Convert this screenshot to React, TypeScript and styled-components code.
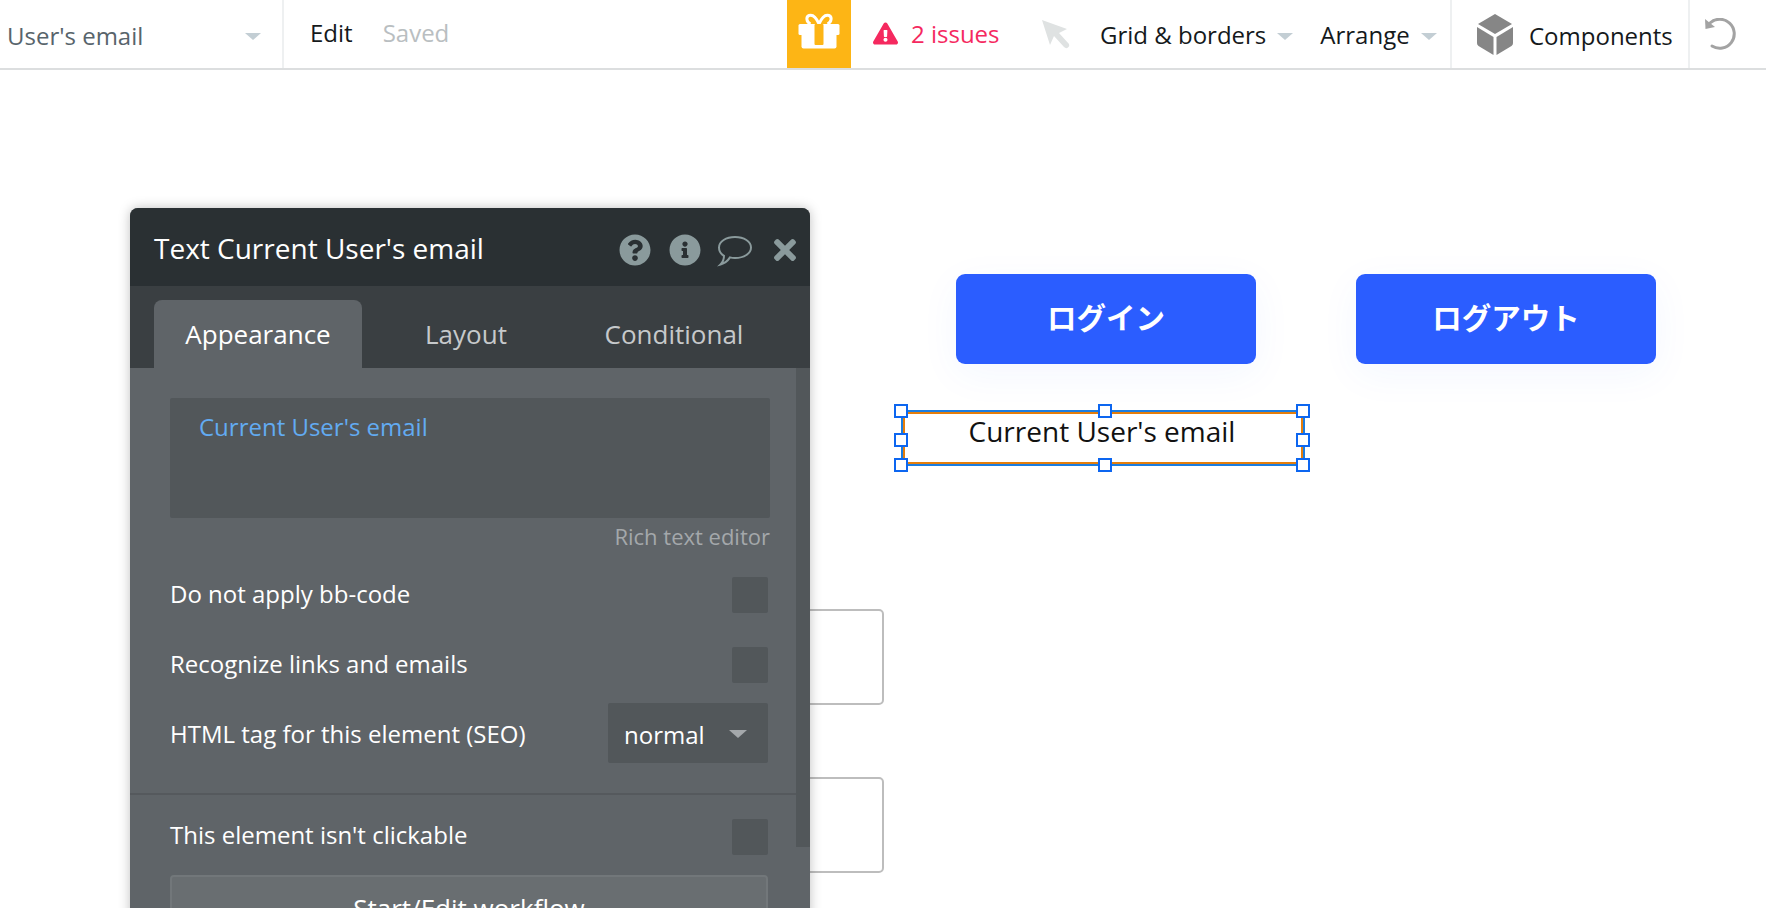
import React from "react";
import styled, { createGlobalStyle } from "styled-components";
import { FaExclamationTriangle, FaInfoCircle, FaQuestionCircle, FaTimes } from "react-icons/fa";

const GlobalStyle = createGlobalStyle`
  html, body {
    margin: 0;
    padding: 0;
    background: #fff;
    overflow: hidden;
  }
  * {
    box-sizing: border-box;
  }
  body {
    font-family: "Open Sans", "Noto Sans CJK JP", sans-serif;
  }
`;

const Page = styled.div`
  width: 1766px;
  height: 908px;
  display: flex;
  flex-direction: column;
  overflow: hidden;
`;

const TopBar = styled.header`
  height: 70px;
  flex: none;
  display: flex;
  align-items: stretch;
  border-bottom: 2px solid #dcdedf;
  font-size: 24px;
  color: #15191b;
  white-space: nowrap;
`;

const Section = styled.div<{ $width?: number; $divider?: boolean; $pad?: number }>`
  display: flex;
  align-items: center;
  flex: none;
  width: ${(p) => (p.$width ? `${p.$width}px` : "auto")};
  padding-left: ${(p) => p.$pad ?? 0}px;
  border-right: ${(p) => (p.$divider ? "2px solid #eef0f1" : "none")};
`;

const PageName = styled.span`
  color: #58646b;
  margin-top: 3px;
  flex: 1;
`;

const Caret = styled.i<{ $size?: number; $color?: string }>`
  display: block;
  flex: none;
  width: 0;
  height: 0;
  border-left: ${(p) => p.$size ?? 8}px solid transparent;
  border-right: ${(p) => p.$size ?? 8}px solid transparent;
  border-top: ${(p) => (p.$size ?? 8) - 1}px solid ${(p) => p.$color ?? "#c3ced4"};
`;

const PageCaret = styled(Caret)`
  margin: 4px 21px 0 0;
`;

const MenuCaret = styled(Caret)`
  margin-top: 3px;
`;

const SavedLabel = styled.span`
  color: #b9bec1;
  margin-left: 30px;
`;

const EditGroup = styled(Section)`
  padding-bottom: 3px;
`;

const GiftButton = styled.div`
  width: 64px;
  flex: none;
  background: #fdb515;
  display: flex;
  align-items: center;
  justify-content: center;
  padding-bottom: 6px;
`;

const Issues = styled.span`
  color: #f5295f;
  display: flex;
  flex: none;
  align-items: center;
  gap: 13px;
  width: 146px;
  padding: 0 0 2px 22px;
  svg {
    font-size: 25px;
    flex: none;
  }
`;

const MenuItem = styled.span<{ $gap: number }>`
  display: flex;
  align-items: center;
  gap: 11px;
  margin-left: ${(p) => p.$gap}px;
  margin-top: 1px;
`;

const ComponentsLabel = styled.span`
  margin-left: 16px;
  margin-top: 2px;
`;

const UndoWrap = styled(Section)`
  padding-top: 2px;
`;

const Canvas = styled.main`
  position: relative;
  flex: 1;
`;

const CanvasButton = styled.div<{ $x: number }>`
  position: absolute;
  left: ${(p) => p.$x}px;
  top: 204px;
  width: 300px;
  height: 90px;
  border-radius: 9px;
  background: #2b5dff;
  box-shadow: 0 10px 40px rgba(43, 93, 255, 0.05);
  color: #fff;
  font-weight: 700;
  font-size: 29.5px;
  padding-bottom: 5px;
  display: flex;
  align-items: center;
  justify-content: center;
`;

const GhostInput = styled.div<{ $y: number }>`
  position: absolute;
  left: 700px;
  top: ${(p) => p.$y}px;
  width: 184px;
  height: 96px;
  border: 2px solid #bdbdbd;
  border-radius: 5px;
`;

const SelectedText = styled.div`
  position: absolute;
  left: 903px;
  top: 342px;
  width: 400px;
  height: 52px;
  padding-right: 2px;
  border: 2px solid #e57e0c;
  outline: 2px solid #1b7de0;
  font-size: 28px;
  color: #111;
  text-align: center;
  line-height: 34px;
`;

const Handle = styled.span<{ $h: "l" | "c" | "r"; $v: "t" | "m" | "b" }>`
  position: absolute;
  width: 14px;
  height: 14px;
  background: #fff;
  border: 2px solid #0d66f0;
  left: ${(p) => (p.$h === "l" ? "-11px" : p.$h === "c" ? "calc(50% - 5px)" : "auto")};
  right: ${(p) => (p.$h === "r" ? "-9px" : "auto")};
  top: ${(p) => (p.$v === "t" ? "-10px" : p.$v === "m" ? "calc(50% - 5px)" : "auto")};
  bottom: ${(p) => (p.$v === "b" ? "-10px" : "auto")};
`;

const Panel = styled.section`
  position: absolute;
  left: 130px;
  top: 138px;
  width: 680px;
  height: 720px;
  background: #5f6468;
  border-radius: 8px 8px 0 0;
  box-shadow: 0 0 12px rgba(0, 0, 0, 0.25);
  overflow: hidden;
  color: #fff;
`;

const PanelHeader = styled.div`
  height: 78px;
  background: #2a3033;
  display: flex;
  align-items: center;
  padding: 2px 9px 0 24px;
  font-size: 28px;
`;

const PanelTitle = styled.span`
  flex: 1;
`;

const HeaderIcons = styled.div`
  display: flex;
  align-items: center;
  color: #8a9a9c;
  gap: 18px;
  font-size: 32px;
  padding-top: 3px;
  svg {
    display: block;
  }
`;

const CommentSvg = styled.svg`
  margin: 2px -2px 0;
`;

const TabBar = styled.div`
  height: 82px;
  background: #3a3f42;
  display: flex;
  align-items: flex-end;
  padding-left: 24px;
  font-size: 26px;
`;

const Tab = styled.div<{ $active?: boolean; $width: number }>`
  width: ${(p) => p.$width}px;
  height: 68px;
  display: flex;
  align-items: center;
  justify-content: center;
  border-radius: 8px 8px 0 0;
  background: ${(p) => (p.$active ? "#5f6468" : "transparent")};
  color: ${(p) => (p.$active ? "#fff" : "#c6c9cb")};
`;

const PanelBody = styled.div`
  position: relative;
  padding: 30px 40px 0 24px;
`;

const Scrollbar = styled.div`
  position: absolute;
  right: 0;
  top: 0;
  width: 14px;
  height: 479px;
  background: #52575a;
`;

const TextBox = styled.div`
  margin-left: 16px;
  height: 120px;
  width: 600px;
  background: #52575a;
  border-radius: 2px;
  padding: 12px 29px;
  font-size: 24px;
  color: #62abf2;
`;

const RichLink = styled.div`
  width: 616px;
  text-align: right;
  color: #a4a8ab;
  font-size: 22px;
  margin-top: 3px;
`;

const Row = styled.div<{ $top?: number }>`
  margin: ${(p) => p.$top ?? 0}px 0 0 16px;
  width: 598px;
  height: 70px;
  display: flex;
  align-items: center;
  justify-content: space-between;
  font-size: 24px;
`;

const RowLabel = styled.span<{ $lift?: number }>`
  padding-bottom: ${(p) => p.$lift ?? 0}px;
`;

const Checkbox = styled.span`
  width: 36px;
  height: 36px;
  flex: none;
  background: #52575a;
  border-radius: 2px;
`;

const SelectBox = styled.div`
  width: 160px;
  height: 60px;
  background: #52575a;
  border-radius: 2px;
  display: flex;
  align-items: center;
  justify-content: space-between;
  padding: 2px 21px 0 16px;
`;

const SectionLine = styled.hr`
  margin: 25px -40px 0 -24px;
  border: 0;
  height: 2px;
  background: #55595d;
`;

const WorkflowButton = styled.div`
  margin: 3px 0 0 16px;
  width: 598px;
  height: 70px;
  background: #696e71;
  border: 2px solid #72777a;
  border-radius: 4px;
  text-align: center;
  font-size: 26px;
  padding-top: 13px;
`;

const GiftIcon = () => (
  <svg width="42" height="36" viewBox="0 0 42 36">
    <path
      d="M21 11 C18 4 14 1.500 11 2.500 C8 3.500 8 9 12.500 11 M21 11 C24 4 28 1.500 31 2.500 C34 3.500 34 9 29.500 11"
      fill="none"
      stroke="#fff"
      strokeWidth="3"
    />
    <rect x="0.500" y="11" width="41" height="11" rx="1.500" fill="#fff" />
    <rect x="3.500" y="20" width="35" height="15.500" rx="2" fill="#fff" />
    <rect x="16.500" y="11" width="9" height="21" rx="1" fill="#fdb515" />
  </svg>
);

const CursorIcon = () => (
  <svg width="30" height="30" viewBox="0 0 30 30">
    <path d="M2 1 L27 10 L19 14 L29 25 Q30 27 28 28.500 Q26 30 24 28 L14 17 L10 26 Z" fill="#dfe2e2" />
  </svg>
);

const CubeIcon = () => (
  <svg width="36" height="41" viewBox="0 0 36 41">
    <path d="M18 0 L35 10 L18 20 L1 10 Z" fill="#868686" />
    <path d="M0 13 L16.500 23 L16.500 41 L1.500 32 Q0 31 0 29 Z" fill="#868686" />
    <path d="M36 13 L19.500 23 L19.500 41 L34.500 32 Q36 31 36 29 Z" fill="#868686" />
  </svg>
);

const UndoIcon = () => (
  <svg width="32" height="34" viewBox="0 0 32 34" fill="none">
    <path d="M6 5 A14.500 14.500 0 1 1 8 28" stroke="#a3a3a3" strokeWidth="3" strokeLinecap="round" />
    <path d="M1 1 L1.500 11 L11 9 Z" fill="#a3a3a3" />
  </svg>
);

const CommentIcon = () => (
  <CommentSvg width="36" height="32" viewBox="0 0 36 32" fill="none">
    <path
      d="M18 2 C27 2 34 6.500 34 12.500 C34 18.500 27 23 18 23 C16 23 14.500 22.800 13 22.400 C11 25.500 7 28.500 3.500 29.500 C5.500 27.500 7 25 7 20.800 C3.800 19 2 16 2 12.500 C2 6.500 9 2 18 2 Z"
      stroke="#8a9a9c"
      strokeWidth="2"
    />
  </CommentSvg>
);

const App = () => {
  return (
    <Page>
      <GlobalStyle />
      <TopBar>
        <Section $width={284} $divider $pad={7}>
          <PageName>User's email</PageName>
          <PageCaret />
        </Section>
        <EditGroup $width={503} $pad={26}>
          <span>Edit</span>
          <SavedLabel>Saved</SavedLabel>
        </EditGroup>
        <GiftButton>
          <GiftIcon />
        </GiftButton>
        <Issues>
          <FaExclamationTriangle />2 issues
        </Issues>
        <Section $width={455} $divider $pad={43}>
          <CursorIcon />
          <MenuItem $gap={30}>
            Grid &amp; borders <MenuCaret />
          </MenuItem>
          <MenuItem $gap={27}>
            Arrange <MenuCaret />
          </MenuItem>
        </Section>
        <Section $width={238} $divider $pad={25}>
          <CubeIcon />
          <ComponentsLabel>Components</ComponentsLabel>
        </Section>
        <UndoWrap $pad={14}>
          <UndoIcon />
        </UndoWrap>
      </TopBar>
      <Canvas>
        <GhostInput $y={539} />
        <GhostInput $y={707} />
        <CanvasButton $x={956}>ログイン</CanvasButton>
        <CanvasButton $x={1356}>ログアウト</CanvasButton>
        <SelectedText>
          Current User's email
          <Handle $h="l" $v="t" />
          <Handle $h="c" $v="t" />
          <Handle $h="r" $v="t" />
          <Handle $h="l" $v="m" />
          <Handle $h="r" $v="m" />
          <Handle $h="l" $v="b" />
          <Handle $h="c" $v="b" />
          <Handle $h="r" $v="b" />
        </SelectedText>
        <Panel>
          <PanelHeader>
            <PanelTitle>Text Current User's email</PanelTitle>
            <HeaderIcons>
              <FaQuestionCircle />
              <FaInfoCircle />
              <CommentIcon />
              <FaTimes size={32} />
            </HeaderIcons>
          </PanelHeader>
          <TabBar>
            <Tab $active $width={208}>
              Appearance
            </Tab>
            <Tab $width={208}>Layout</Tab>
            <Tab $width={208}>Conditional</Tab>
          </TabBar>
          <PanelBody>
            <Scrollbar />
            <TextBox>Current User's email</TextBox>
            <RichLink>Rich text editor</RichLink>
            <Row $top={9}>
              <RowLabel $lift={4}>Do not apply bb-code</RowLabel>
              <Checkbox />
            </Row>
            <Row>
              <RowLabel $lift={4}>Recognize links and emails</RowLabel>
              <Checkbox />
            </Row>
            <Row $top={-2}>
              <RowLabel>HTML tag for this element (SEO)</RowLabel>
              <SelectBox>
                normal <Caret $size={9} $color="#a4a8ab" />
              </SelectBox>
            </Row>
            <SectionLine />
            <Row $top={7}>
              <RowLabel $lift={6}>This element isn't clickable</RowLabel>
              <Checkbox />
            </Row>
            <WorkflowButton>Start/Edit workflow</WorkflowButton>
          </PanelBody>
        </Panel>
      </Canvas>
    </Page>
  );
};

export default App;
